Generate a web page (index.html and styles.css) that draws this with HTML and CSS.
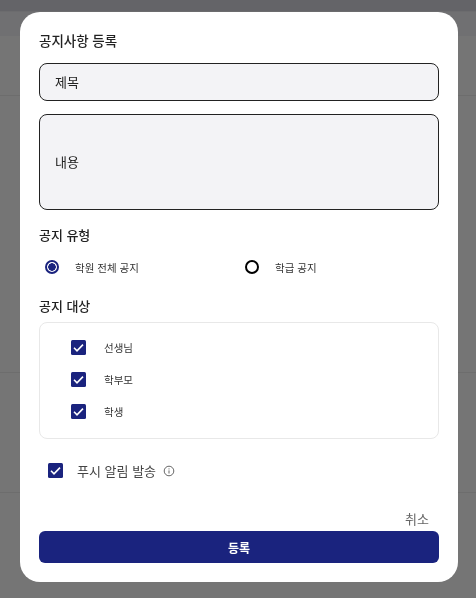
FILE: index.html
```html
<!DOCTYPE html>
<html lang="ko">

<head>
    <meta charset="UTF-8">
    <title>공지사항 등록</title>
    <link rel="stylesheet" href="styles.css">
</head>

<body>

    <!-- 뒤쪽 목록 화면 -->
    <div class="backdrop">
        <div class="status-bar"></div>
        <div class="list-head"></div>
        <div class="list-row row-a"></div>
        <div class="list-row row-b"></div>
        <div class="list-row row-c"></div>
    </div>

    <div class="modal">
        <h1 class="modal-title">공지사항 등록</h1>

        <div class="field field-title">제목</div>
        <div class="field field-body">내용</div>

        <h2 class="section-title type-title">공지 유형</h2>
        <div class="radio-group">
            <div class="radio-item">
                <span class="radio radio-on"></span>
                <span class="option-label">학원 전체 공지</span>
            </div>
            <div class="radio-item">
                <span class="radio"></span>
                <span class="option-label">학급 공지</span>
            </div>
        </div>

        <h2 class="section-title target-title">공지 대상</h2>
        <div class="target-box">
            <div class="check-item">
                <svg class="check" viewBox="0 0 15 15"><rect width="15" height="15" rx="1.5" fill="#1a237e"/><path d="M3 7.8l3 3 6-6.2" fill="none" stroke="#fff" stroke-width="1.6"/></svg>
                <span class="option-label">선생님</span>
            </div>
            <div class="check-item">
                <svg class="check" viewBox="0 0 15 15"><rect width="15" height="15" rx="1.5" fill="#1a237e"/><path d="M3 7.8l3 3 6-6.2" fill="none" stroke="#fff" stroke-width="1.6"/></svg>
                <span class="option-label">학부모</span>
            </div>
            <div class="check-item">
                <svg class="check" viewBox="0 0 15 15"><rect width="15" height="15" rx="1.5" fill="#1a237e"/><path d="M3 7.8l3 3 6-6.2" fill="none" stroke="#fff" stroke-width="1.6"/></svg>
                <span class="option-label">학생</span>
            </div>
        </div>

        <div class="push-row">
            <svg class="check push-check" viewBox="0 0 15 15"><rect width="15" height="15" rx="1.5" fill="#1a237e"/><path d="M3 7.8l3 3 6-6.2" fill="none" stroke="#fff" stroke-width="1.6"/></svg>
            <span class="push-label">푸시 알림 발송</span>
            <svg class="info" viewBox="0 0 12 12"><circle cx="6" cy="6" r="4.8" fill="none" stroke="#666" stroke-width="1"/><path d="M6 5.4v3.1M6 3.4v1" fill="none" stroke="#666" stroke-width="1"/></svg>
        </div>

        <div class="cancel">취소</div>
        <button type="button" class="submit-btn">등록</button>
    </div>

</body>

</html>
```

FILE: styles.css
```css
* {
    box-sizing: border-box;
}

html,
body {
    margin: 0;
    height: 100%;
}

body {
    font-family: Inter, "Noto Sans CJK KR", sans-serif;
    color: #222;
    overflow: hidden;
    background-color: #757575;
}

.backdrop {
    height: 598px;
}

.status-bar {
    height: 11px;
    background-color: #646468;
}

.list-head {
    height: 25px;
    background-color: #707072;
    border-top: 1px solid #6c6c6e;
}

.list-row {
    border-bottom: 1px solid #6d6d6d;
}

.row-a {
    height: 60px;
}

.row-b {
    height: 277px;
}

.row-c {
    height: 120px;
}

.modal {
    position: absolute;
    top: 12px;
    left: 20px;
    width: 438px;
    height: 570px;
    padding: 0 19px;
    background-color: #fff;
    border-radius: 20px;
    will-change: transform;
}

.modal-title {
    margin: 20px 0 12px;
    font-size: 13.5px;
    line-height: 19px;
    font-weight: 500;
}

.field {
    display: flex;
    align-items: center;
    padding: 0 0 2px 15px;
    font-size: 13px;
    font-weight: 400;
    color: #222;
    background-color: #f3f3f6;
    border: 1px solid #222;
    border-radius: 8px;
}

.field-title {
    height: 38px;
}

.field-body {
    height: 96px;
    margin-top: 13px;
}

.section-title {
    margin: 0;
    font-size: 13px;
    line-height: 18px;
    font-weight: 500;
}

.type-title {
    margin-top: 16px;
}

.target-title {
    margin-top: 18px;
}

.radio-group {
    display: flex;
    margin-top: 11px;
    height: 24px;
}

.radio-item {
    display: flex;
    align-items: center;
    width: 200px;
    padding-left: 6px;
}

.radio {
    width: 14px;
    height: 14px;
    margin-right: 16px;
    border: 2px solid #000;
    border-radius: 50%;
}

.radio-on {
    border-color: #1a237e;
    background: radial-gradient(circle, #1a237e 0 3.5px, #fff 4px);
}

.option-label {
    font-size: 10.5px;
    font-weight: 400;
    color: #333;
}

.target-box {
    height: 117px;
    margin-top: 7px;
    padding: 8px 0 0 31px;
    border: 1px solid #e8e8e8;
    border-radius: 8px;
}

.check-item {
    display: flex;
    align-items: center;
    height: 32px;
}

.check {
    width: 15px;
    height: 15px;
    margin-right: 18px;
    flex: none;
}

.push-row {
    display: flex;
    align-items: center;
    height: 24px;
    margin-top: 19px;
    padding-left: 9px;
}

.push-check {
    margin-right: 14px;
}

.push-label {
    font-size: 13px;
    font-weight: 400;
    color: #444;
}

.info {
    width: 12px;
    height: 12px;
    margin: 1px 0 0 7px;
}

.cancel {
    margin-top: 28px;
    padding-right: 10px;
    font-size: 13px;
    font-weight: 400;
    line-height: 18px;
    text-align: right;
    color: #666;
}

.submit-btn {
    display: block;
    width: 100%;
    height: 32px;
    margin-top: 3px;
    padding: 0;
    font-family: inherit;
    font-size: 12px;
    font-weight: 600;
    color: #fff;
    background-color: #1a237e;
    border: none;
    border-radius: 6px;
}
```
